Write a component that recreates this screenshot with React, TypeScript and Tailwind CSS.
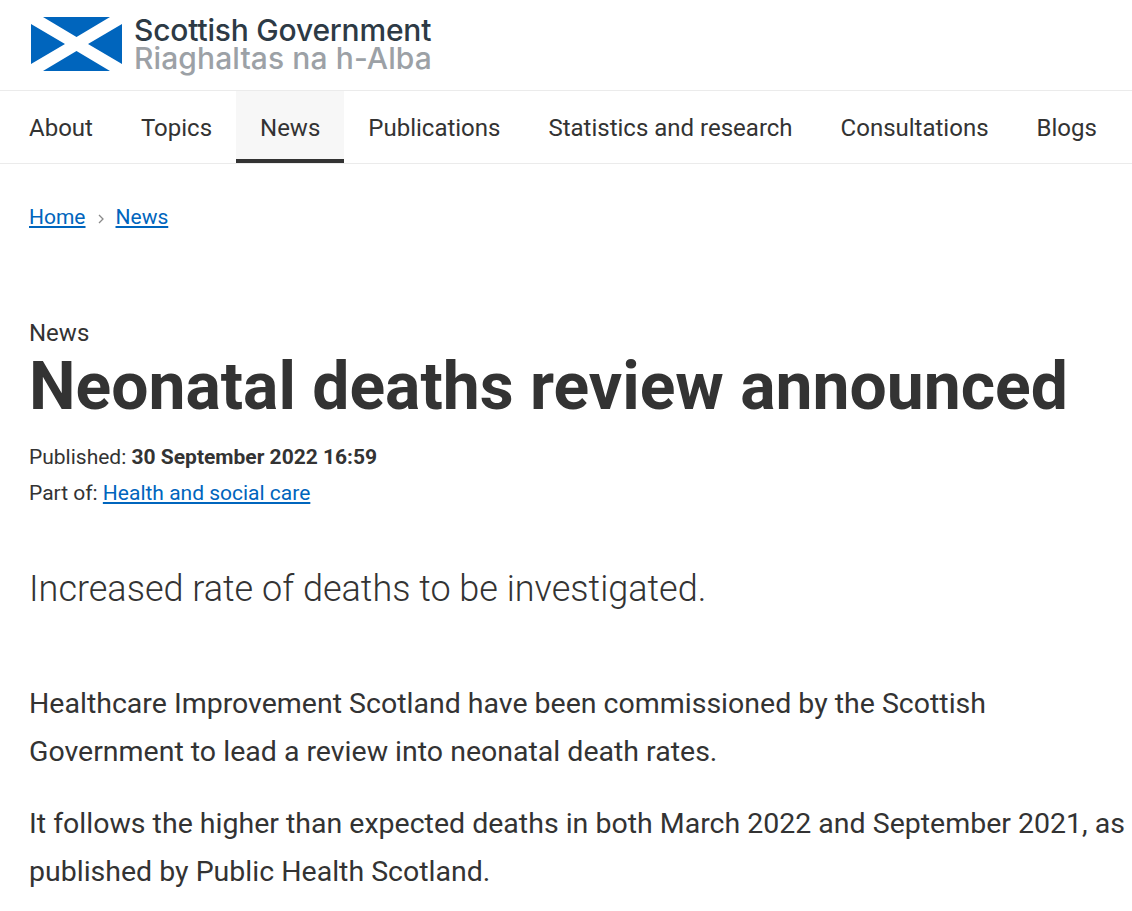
const navItems = ["About", "Topics", "News", "Publications", "Statistics and research", "Consultations", "Blogs"];

function Saltire() {
  return (
    <svg width="91" height="54" viewBox="0 0 91 54" className="block shrink-0">
      <rect width="91" height="54" fill="#0065bd" />
      <path d="M0 0 L12 0 L45.500 20 L79 0 L91 0 L91 7 L57 27 L91 47 L91 54 L79 54 L45.500 34 L12 54 L0 54 L0 47 L34 27 L0 7 Z" fill="#fff" />
    </svg>
  );
}

function NavItem({ label }: { label: string }) {
  const active = label === "News";
  return (
    <a
      className={`flex h-[72px] items-center px-6 text-[24px] leading-[32px] text-[#333] ${
        active ? "border-b-4 border-[#333] bg-[#f7f7f7] pt-[6px]" : "pt-[2px]"
      }`}
    >
      {label}
    </a>
  );
}

export default function App() {
  return (
    <div className="min-h-[911px] overflow-hidden bg-white font-['Roboto',sans-serif] text-[#333]">
      <header className="flex h-[90px] items-center pb-[3px] pl-[31px]">
        <Saltire />
        <div className="ml-[12px] font-['Inter',sans-serif] font-medium">
          <div className="text-[30px] leading-[28px] tracking-[-0.2px] text-[#2d3a45]">Scottish Government</div>
          <div className="text-[30px] leading-[28px] tracking-[0.1px] text-[#9ca1a6]">Riaghaltas na h-Alba</div>
        </div>
      </header>

      <nav className="flex h-[74px] border-y border-[#ebebeb] pl-[5px]">
        {navItems.map((item) => (
          <NavItem key={item} label={item} />
        ))}
      </nav>

      <div className="mt-[37px] flex items-center text-[21px] leading-[32px]">
        <a className="ml-[29px] text-[#0065bd] underline">Home</a>
        <svg width="8" height="10" viewBox="0 0 8 10" className="mx-[11px] mt-1 text-[#8a8a8a]">
          <path d="M2 1 L6 5 L2 9" fill="none" stroke="currentColor" strokeWidth="1.300" />
        </svg>
        <a className="text-[#0065bd] underline">News</a>
      </div>

      <main className="pl-[29px]">
        <div className="mt-[84px] text-[24px] leading-[32px]">News</div>
        <h1 className="mt-[2px] whitespace-nowrap text-[66px] font-bold leading-[72px]">Neonatal deaths review announced</h1>
        <div className="mt-[16px] text-[21px] leading-[36px]">
          <div>
            Published: <strong className="font-bold">30 September 2022 16:59</strong>
          </div>
          <div>
            Part of: <a className="text-[#0065bd] underline">Health and social care</a>
          </div>
        </div>
        <p className="mt-[54px] text-[36px] font-light leading-[48px]">Increased rate of deaths to be investigated.</p>
        <div className="mt-[67px] text-[28.500px] leading-[48px]">
          <p className="w-[1090px]">Healthcare Improvement Scotland have been commissioned by the Scottish Government to lead a review into neonatal death rates.</p>
          <p className="mt-6 w-[1100px]">It follows the higher than expected deaths in both March 2022 and September 2021, as published by Public Health Scotland.</p>
        </div>
      </main>
    </div>
  );
}
